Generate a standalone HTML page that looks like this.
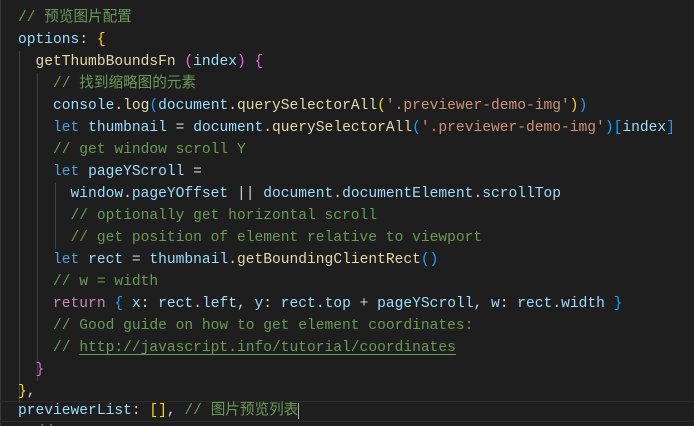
<!DOCTYPE html>
<html><head><meta charset="utf-8"><style>
html,body{margin:0;padding:0;width:694px;height:426px;overflow:hidden;}
body{background:#1e1e1e;position:relative;font-family:"Liberation Mono","Noto Sans CJK SC",monospace;font-size:14.6px;color:#d4d4d4;}
.l{position:absolute;left:18px;height:22px;line-height:22px;white-space:pre;}
.c{color:#6a9955}.p{color:#9cdcfe}.f{color:#dcdcaa}.k{color:#569cd6}.r{color:#c586c0}.s{color:#ce9178}
.y{color:#ffd700}.m{color:#da70d6}.b{color:#179fff}
.g{position:absolute;width:1px;background:#404040}
.cur{position:absolute;left:0;top:401px;width:694px;height:19px;border-top:1px solid #2c2c2c;border-bottom:1px solid #2c2c2c}
u{text-decoration:underline;text-underline-offset:3px}
</style></head><body>
<div style="position:absolute;left:0;top:0;width:1px;height:426px;background:#3a3a3a"></div>
<div class="cur"></div>
<div class="g" style="left:19px;top:51px;height:352px"></div>
<div class="g" style="left:37px;top:73px;height:308px"></div>
<div class="g" style="left:55px;top:183px;height:66px"></div>
<div class="l c" style="top:-15px">  // ·····  ··········</div>
<div class="l c" style="top:7px">// 预览图片配置</div>
<div class="l" style="top:29px"><span class="p">options</span>: <span class="y">{</span></div>
<div class="l" style="top:51px">  <span class="f">getThumbBoundsFn</span> <span class="m">(</span><span class="p">index</span><span class="m">)</span> <span class="m">{</span></div>
<div class="l c" style="top:73px">    // 找到缩略图的元素</div>
<div class="l" style="top:95px">    <span class="p">console</span>.<span class="f">log</span><span class="b">(</span><span class="p">document</span>.<span class="f">querySelectorAll</span><span class="y">(</span><span class="s">'.previewer-demo-img'</span><span class="y">)</span><span class="b">)</span></div>
<div class="l" style="top:117px">    <span class="k">let</span> <span class="p">thumbnail</span> = <span class="p">document</span>.<span class="f">querySelectorAll</span><span class="b">(</span><span class="s">'.previewer-demo-img'</span><span class="b">)</span><span class="b">[</span><span class="p">index</span><span class="b">]</span></div>
<div class="l c" style="top:139px">    // get window scroll Y</div>
<div class="l" style="top:161px">    <span class="k">let</span> <span class="p">pageYScroll</span> =</div>
<div class="l" style="top:183px">      <span class="p">window</span>.<span class="p">pageYOffset</span> || <span class="p">document</span>.<span class="p">documentElement</span>.<span class="p">scrollTop</span></div>
<div class="l c" style="top:205px">      // optionally get horizontal scroll</div>
<div class="l c" style="top:227px">      // get position of element relative to viewport</div>
<div class="l" style="top:249px">    <span class="k">let</span> <span class="p">rect</span> = <span class="p">thumbnail</span>.<span class="f">getBoundingClientRect</span><span class="b">()</span></div>
<div class="l c" style="top:271px">    // w = width</div>
<div class="l" style="top:293px">    <span class="r">return</span> <span class="b">{</span> <span class="p">x</span>: <span class="p">rect</span>.<span class="p">left</span>, <span class="p">y</span>: <span class="p">rect</span>.<span class="p">top</span> + <span class="p">pageYScroll</span>, <span class="p">w</span>: <span class="p">rect</span>.<span class="p">width</span> <span class="b">}</span></div>
<div class="l c" style="top:315px">    // Good guide on how to get element coordinates:</div>
<div class="l c" style="top:337px">    // <u>http://javascript.info/tutorial/coordinates</u></div>
<div class="l" style="top:359px">  <span class="m">}</span></div>
<div class="l" style="top:381px"><span class="y">}</span>,</div>
<div class="l" style="top:400px"><span class="p">previewerList</span>: <span class="y">[</span><span class="y">]</span>, <span class="c">// 图片预览列表</span><span style="border-left:1px solid #aeafad"></span></div>
<div class="l c" style="top:421px">  // ······ ·····</div>
</body></html>
